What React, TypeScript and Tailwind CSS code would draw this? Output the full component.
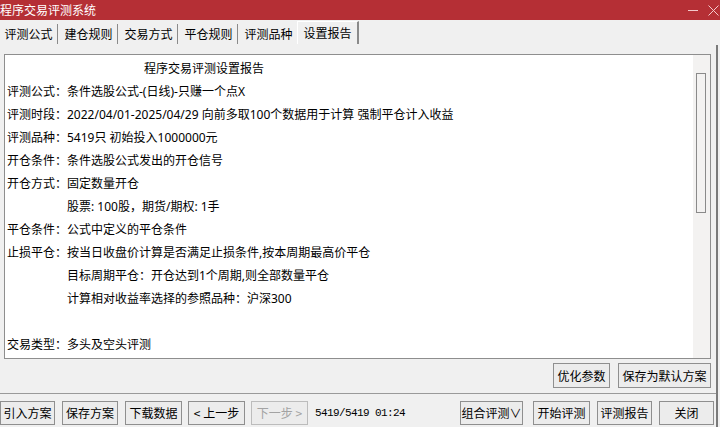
import React from "react";

const FONT = '"Noto Sans CJK SC", "Microsoft YaHei", sans-serif';
const REPORT_FONT = '"Noto Sans", "Noto Sans CJK SC", sans-serif';

function Btn({ w, children, disabled }: { w: string; children: React.ReactNode; disabled?: boolean }) {
  return (
    <div
      className={`${w} h-full shrink-0 flex items-center justify-center border border-[#8f8f8f] bg-[#ececec] text-[12px] leading-none ${disabled ? "text-[#a3a3a3] border-[#bcbcbc]" : "text-black"}`}
    >
      {children}
    </div>
  );
}

const lines: [string, string][] = [
  ["评测公式：", "条件选股公式-(日线)-只赚一个点X"],
  ["评测时段：", "2022/04/01-2025/04/29 向前多取100个数据用于计算 强制平仓计入收益"],
  ["评测品种：", "5419只 初始投入1000000元"],
  ["开仓条件：", "条件选股公式发出的开仓信号"],
  ["开仓方式：", "固定数量开仓"],
  ["", "股票: 100股，期货/期权: 1手"],
  ["平仓条件：", "公式中定义的平仓条件"],
  ["止损平仓：", "按当日收盘价计算是否满足止损条件,按本周期最高价平仓"],
  ["", "目标周期平仓：开仓达到1个周期,则全部数量平仓"],
  ["", "计算相对收益率选择的参照品种：沪深300"],
  ["", ""],
  ["交易类型：", "多头及空头评测"],
];

const tabs = ["评测公式", "建仓规则", "交易方式", "平仓规则", "评测品种"];

export default function App() {
  return (
    <div className="w-[720px] h-[427px] bg-[#f0f0f0] relative overflow-hidden text-black" style={{ fontFamily: FONT }}>
      {/* title bar */}
      <div className="h-[20px] bg-[#b52f35] flex items-center justify-between">
        <span className="text-white text-[12px] leading-none">程序交易评测系统</span>
        <div className="flex items-center gap-[10px] pr-[1px]">
          <div className="w-[10px] h-px bg-[#f3c9cb]" />
          <svg width="11" height="11" viewBox="0 0 11 11">
            <path d="M0.5 0.5 L10.5 10.5 M10.5 0.5 L0.5 10.5" stroke="#f3c9cb" strokeWidth="1" />
          </svg>
        </div>
      </div>

      {/* tabs */}
      <div className="h-[24px] flex items-end">
        {tabs.map((t) => (
          <div
            key={t}
            className="h-[20px] w-[58px] mr-[2px] flex items-center justify-center border-r border-[#8a8a8a] text-[12px] leading-none pb-[1px]"
          >
            {t}
          </div>
        ))}
        <div className="h-[23px] w-[62px] -ml-[3px] flex items-center justify-center border-l border-t border-white border-r-2 border-r-[#8a8a8a] text-[12px] leading-none bg-[#f0f0f0]">
          设置报告
        </div>
      </div>

      {/* right window edge */}
      <div className="absolute right-[2px] top-[45px] bottom-0 w-[2px] bg-[#7a7a7a]" />

      {/* report panel */}
      <div className="mt-[10px] ml-[4px] w-[707px] h-[305px] border border-[#8e8e8e] flex">
        <div className="flex-1 bg-white pl-[2px] pt-[2px] text-[12px]" style={{ fontFamily: REPORT_FONT }}>
          <div className="h-[23px] leading-[23px] pl-[137px]">程序交易评测设置报告</div>
          {lines.map(([l, v], i) => (
            <div key={i} className="h-[23px] leading-[23px] flex whitespace-pre">
              <span className="w-[60px] shrink-0">{l}</span>
              <span>{v}</span>
            </div>
          ))}
        </div>
        <div className="w-[17px] bg-[#f3f2f1] pt-[18px] pl-[3px]">
          <div className="w-[10px] h-[140px] border border-[#8a8a8a] bg-[#f3f2f1]" />
        </div>
      </div>

      {/* top right buttons */}
      <div className="h-[25px] mt-[4px] flex justify-end pr-[9px] gap-[8px]">
        <Btn w="w-[57px]">优化参数</Btn>
        <Btn w="w-[93px]">保存为默认方案</Btn>
      </div>

      {/* separator */}
      <div className="mt-[5px] h-px w-[717px] bg-[#9a9a9a]" />

      {/* bottom bar */}
      <div className="h-[24px] mt-[7px] flex items-center">
        <Btn w="w-[55px]">引入方案</Btn>
        <div className="w-[7px] shrink-0" />
        <Btn w="w-[56px]">保存方案</Btn>
        <div className="w-[7px] shrink-0" />
        <Btn w="w-[57px]">下载数据</Btn>
        <div className="w-[6px] shrink-0" />
        <Btn w="w-[57px]">&lt; 上一步</Btn>
        <div className="w-[6px] shrink-0" />
        <Btn w="w-[57px]" disabled>
          下一步 &gt;
        </Btn>
        <span
          className="ml-[7px] w-[145px] shrink-0 text-[11px] tracking-[-0.6px] leading-none"
          style={{ fontFamily: '"Liberation Mono", monospace' }}
        >
          5419/5419 01:24
        </span>
        <Btn w="w-[63px]">组合评测∨</Btn>
        <div className="w-[10px] shrink-0" />
        <Btn w="w-[57px]">开始评测</Btn>
        <div className="w-[7px] shrink-0" />
        <Btn w="w-[55px]">评测报告</Btn>
        <div className="w-[7px] shrink-0" />
        <Btn w="w-[55px]">关闭</Btn>
      </div>
    </div>
  );
}
